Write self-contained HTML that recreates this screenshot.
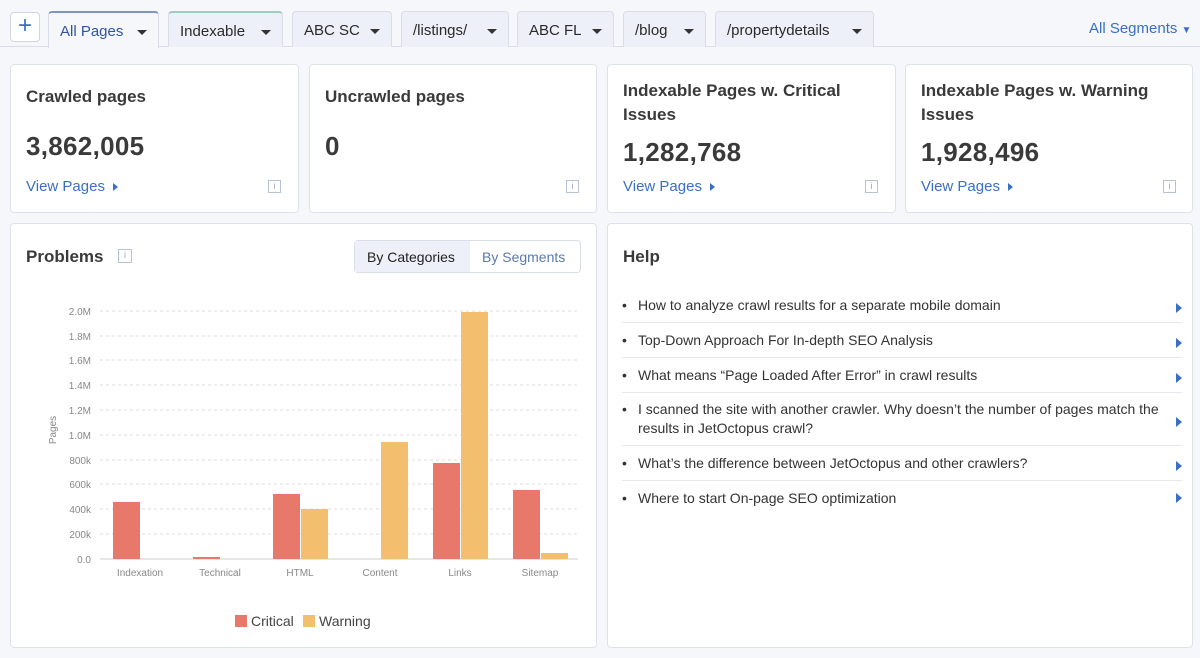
<!DOCTYPE html>
<html><head><meta charset="utf-8"><style>
*{box-sizing:border-box;margin:0;padding:0}
body{width:1200px;height:658px;background:#f6f7fb;font-family:"Liberation Sans",sans-serif;color:#333;position:relative;overflow:hidden}
.abs{position:absolute}
.tab{position:absolute;top:11px;height:36px;background:#edf0f8;border:1px solid #d8dde8;border-bottom:none;border-radius:4px 4px 0 0;font-size:15px;color:#2a2a2a;padding:10px 0 0 11px}
.tab:after{content:"";position:absolute;right:11px;top:17px;border:5px solid transparent;border-top:5px solid #333;border-bottom:none}
.card{position:absolute;background:#fff;border:1px solid #dde1ea;border-radius:4px}
.t{position:absolute;font-size:17px;color:#3a3a3a;line-height:24px;font-weight:bold}
.n{position:absolute;font-size:26px;color:#3a3a3a;letter-spacing:.3px;font-weight:bold}
.v{position:absolute;font-size:15px;color:#3a6fc4}
.v:after{content:"";display:inline-block;margin-left:8px;border:4px solid transparent;border-left:5px solid #3a6fc4;border-right:none;vertical-align:0}
.i{position:absolute;width:13px;height:13px;border:1px solid #b8c2d4;font-size:9px;color:#9aa6bc;text-align:center;line-height:11px}
.h{position:absolute;left:622px;width:560px;font-size:14px;color:#333;border-bottom:1px solid #e6e8ee;line-height:19px}
.h:before{content:"•";position:absolute;left:0}
.h span{display:block;padding-left:16px}
.h:after{content:"";position:absolute;right:0;top:50%;margin-top:-6px;border:5px solid transparent;border-left:6px solid #3a6fc4;border-right:none}
</style></head><body>
<div class="abs" style="left:0;top:46px;width:1200px;height:1px;background:#d8dde8"></div>
<div class="abs" style="left:10px;top:12px;width:30px;height:30px;border:1px solid #d0d6e2;border-radius:4px;background:#fff;color:#3a6fc4;font-size:24px;text-align:center;line-height:26px">+</div>
<div class="tab" style="left:48px;width:111px;background:#f6f7fb;color:#2f55a0;border-top:2px solid #7d96c0;height:37px">All Pages</div>
<div class="tab" style="left:168px;width:115px;border-top:2px solid #9ccdc0">Indexable</div>
<div class="tab" style="left:292px;width:100px">ABC SC</div>
<div class="tab" style="left:401px;width:108px">/listings/</div>
<div class="tab" style="left:517px;width:97px">ABC FL</div>
<div class="tab" style="left:623px;width:83px">/blog</div>
<div class="tab" style="left:715px;width:159px">/propertydetails</div>
<div class="abs" style="left:1089px;top:20px;font-size:15px;color:#3a6fc4">All Segments <span style="font-size:10px">▼</span></div>

<div class="card" style="left:10px;top:64px;width:289px;height:149px"></div>
<div class="t" style="left:26px;top:85px">Crawled pages</div>
<div class="n" style="left:26px;top:131px">3,862,005</div>
<div class="v" style="left:26px;top:178px">View Pages</div>
<div class="i" style="left:268px;top:180px">i</div>
<div class="card" style="left:309px;top:64px;width:288px;height:149px"></div>
<div class="t" style="left:325px;top:85px">Uncrawled pages</div>
<div class="n" style="left:325px;top:131px">0</div>
<div class="i" style="left:566px;top:180px">i</div>
<div class="card" style="left:607px;top:64px;width:289px;height:149px"></div>
<div class="t" style="left:623px;top:79px">Indexable Pages w. Critical<br>Issues</div>
<div class="n" style="left:623px;top:137px">1,282,768</div>
<div class="v" style="left:623px;top:178px">View Pages</div>
<div class="i" style="left:865px;top:180px">i</div>
<div class="card" style="left:905px;top:64px;width:288px;height:149px"></div>
<div class="t" style="left:921px;top:79px">Indexable Pages w. Warning<br>Issues</div>
<div class="n" style="left:921px;top:137px">1,928,496</div>
<div class="v" style="left:921px;top:178px">View Pages</div>
<div class="i" style="left:1163px;top:180px">i</div>

<div class="card" style="left:10px;top:223px;width:587px;height:425px"></div>
<div class="t" style="left:26px;top:245px">Problems</div>
<div class="i" style="left:118px;top:249px;width:14px;height:14px">i</div>
<div class="abs" style="left:354px;top:240px;width:227px;height:33px;border:1px solid #d8dde8;border-radius:4px;background:#fff;font-size:14px">
<div class="abs" style="left:0;top:0;width:115px;height:31px;background:#edf0f8;color:#222;padding:8px 0 0 12px">By Categories</div>
<div class="abs" style="left:127px;top:8px;color:#5a7ab0">By Segments</div></div>
<svg class="abs" style="left:0;top:0" width="600" height="658" font-family="Liberation Sans" font-size="10" fill="#888">
<g stroke="#ddd" stroke-dasharray="3,3">
<line x1="100" x2="578" y1="311" y2="311"/><line x1="100" x2="578" y1="336" y2="336"/><line x1="100" x2="578" y1="360" y2="360"/><line x1="100" x2="578" y1="385" y2="385"/><line x1="100" x2="578" y1="410" y2="410"/><line x1="100" x2="578" y1="435" y2="435"/><line x1="100" x2="578" y1="460" y2="460"/><line x1="100" x2="578" y1="484" y2="484"/><line x1="100" x2="578" y1="509" y2="509"/><line x1="100" x2="578" y1="534" y2="534"/></g>
<line x1="100" x2="578" y1="559" y2="559" stroke="#ccc"/>
<g text-anchor="end"><text x="91" y="315">2.0M</text><text x="91" y="340">1.8M</text><text x="91" y="364">1.6M</text><text x="91" y="389">1.4M</text><text x="91" y="414">1.2M</text><text x="91" y="439">1.0M</text><text x="91" y="464">800k</text><text x="91" y="488">600k</text><text x="91" y="513">400k</text><text x="91" y="538">200k</text><text x="91" y="563">0.0</text></g>
<text transform="translate(56,430) rotate(-90)" text-anchor="middle">Pages</text>
<g fill="#e8786a"><rect x="113" y="502" width="27" height="57"/><rect x="193" y="557" width="27" height="2"/><rect x="273" y="494" width="27" height="65"/><rect x="433" y="463" width="27" height="96"/><rect x="513" y="490" width="27" height="69"/></g>
<g fill="#f3bf6e"><rect x="301" y="509" width="27" height="50"/><rect x="381" y="442" width="27" height="117"/><rect x="461" y="312" width="27" height="247"/><rect x="541" y="553" width="27" height="6"/></g>
<g text-anchor="middle"><text x="140" y="576">Indexation</text><text x="220" y="576">Technical</text><text x="300" y="576">HTML</text><text x="380" y="576">Content</text><text x="460" y="576">Links</text><text x="540" y="576">Sitemap</text></g>
<rect x="235" y="615" width="12" height="12" fill="#e8786a"/><text x="251" y="626" font-size="14" fill="#444">Critical</text>
<rect x="303" y="615" width="12" height="12" fill="#f3bf6e"/><text x="319" y="626" font-size="14" fill="#444">Warning</text>
</svg>

<div class="card" style="left:607px;top:223px;width:586px;height:425px"></div>
<div class="t" style="left:623px;top:245px">Help</div>
<div class="h" style="top:296px;height:27px"><span>How to analyze crawl results for a separate mobile domain</span></div>
<div class="h" style="top:331px;height:27px"><span>Top-Down Approach For In-depth SEO Analysis</span></div>
<div class="h" style="top:366px;height:27px"><span>What means “Page Loaded After Error” in crawl results</span></div>
<div class="h" style="top:400px;height:46px"><span>I scanned the site with another crawler. Why doesn’t the number of pages match the results in JetOctopus crawl?</span></div>
<div class="h" style="top:454px;height:27px"><span>What’s the difference between JetOctopus and other crawlers?</span></div>
<div class="h" style="top:489px;height:19px;border:none"><span>Where to start On-page SEO optimization</span></div>
</body></html>
